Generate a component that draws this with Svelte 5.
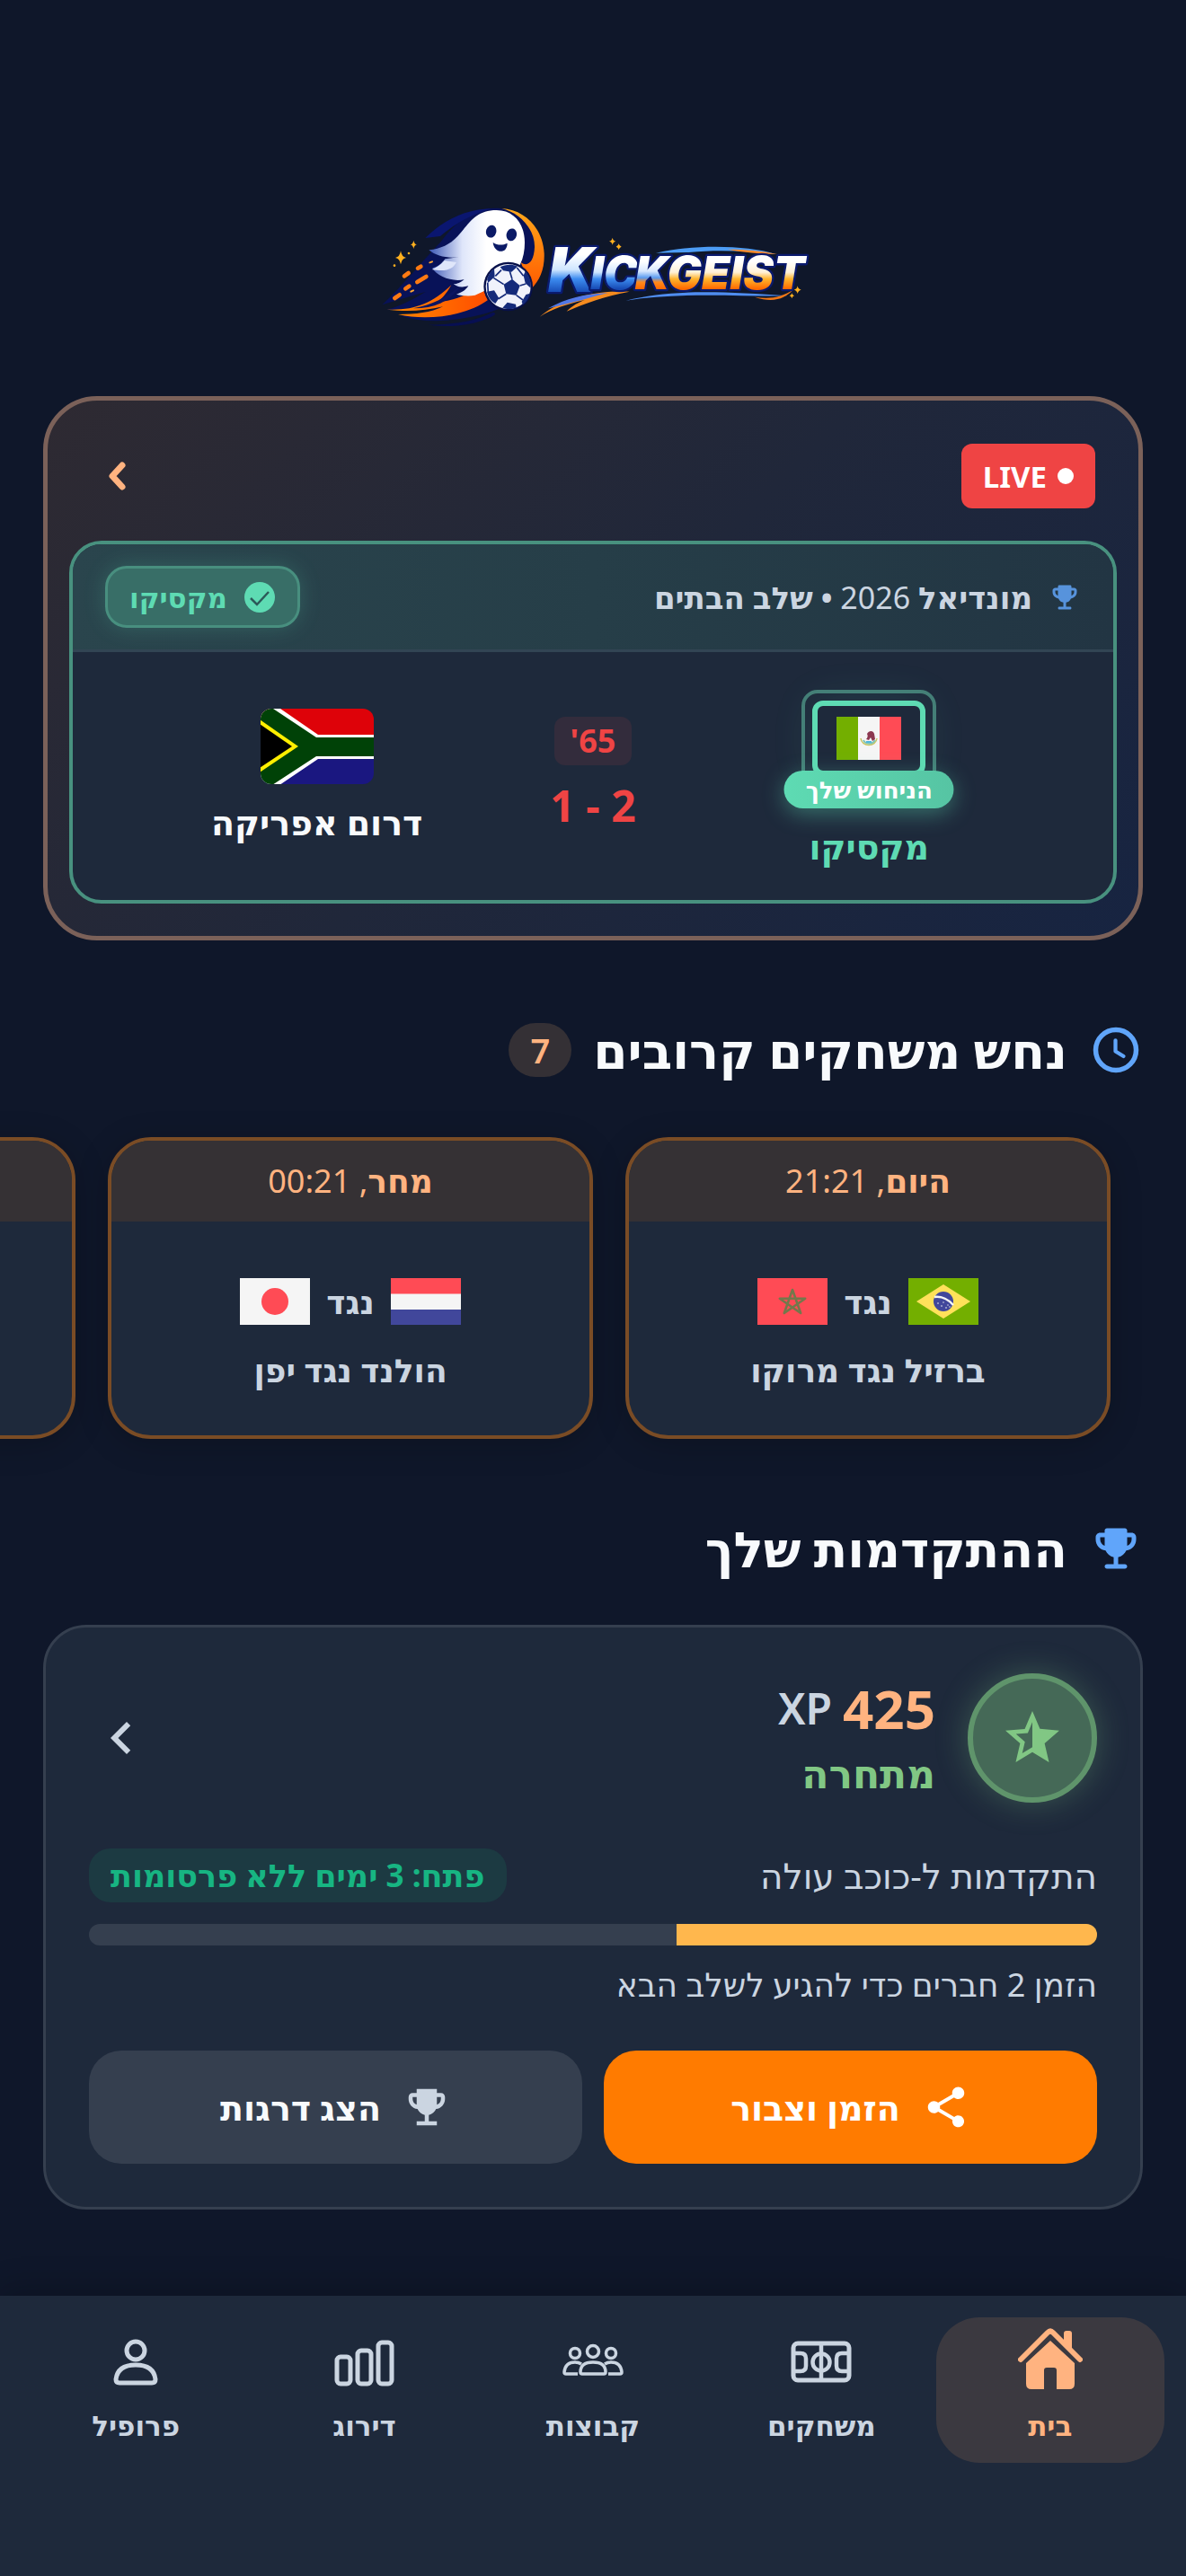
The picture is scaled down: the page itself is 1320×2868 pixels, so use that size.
<script lang="ts">
	type Match = { time_label: string; time: string; home: string; away: string; home_flag: string; away_flag: string };

	let upcoming: Match[] = [
		{ time_label: 'היום', time: '21:21', home: 'ברזיל', away: 'מרוקו', home_flag: 'br', away_flag: 'ma' },
		{ time_label: 'מחר', time: '00:21', home: 'הולנד', away: 'יפן', home_flag: 'nl', away_flag: 'jp' }
	];

	let tabs = [
		{ id: 'home', label: 'בית' },
		{ id: 'matches', label: 'משחקים' },
		{ id: 'groups', label: 'קבוצות' },
		{ id: 'ranking', label: 'דירוג' },
		{ id: 'profile', label: 'פרופיל' }
	];

	let active = $state('home');
	let upcoming_count = 7;
	let xp = 425;
	let progress = 41.7;
</script>

{#snippet trophy()}
	<svg class="icon" viewBox="0 0 24 24" fill="currentColor" aria-hidden="true">
		<path
			d="M19 5h-2V4c0-.55-.45-1-1-1H8c-.55 0-1 .45-1 1v1H5c-1.1 0-2 .9-2 2v1c0 2.55 1.92 4.63 4.39 4.94.63 1.5 1.98 2.63 3.61 2.96V19H8c-.55 0-1 .45-1 1s.45 1 1 1h8c.55 0 1-.45 1-1s-.45-1-1-1h-3v-3.1c1.63-.33 2.98-1.46 3.61-2.96C19.08 12.63 21 10.55 21 8V7c0-1.1-.9-2-2-2zM5 8V7h2v3.82C5.84 10.4 5 9.3 5 8zm14 0c0 1.3-.84 2.4-2 2.82V7h2v1z"
		/>
	</svg>
{/snippet}

{#snippet flag(code: string)}
	<svg class="flag" viewBox="0 0 78 52" preserveAspectRatio="none" aria-hidden="true">
		{#if code === 'br'}
			<rect width="78" height="52" fill="#73af00" />
			<path d="M39 7 69 26 39 45 9 26z" fill="#ffe15a" />
			<circle cx="39" cy="26" r="11" fill="#41479b" />
			<path d="M29 21c8-1 16 3 21 9" fill="none" stroke="#f5f5f5" stroke-width="2.6" />
			<g fill="#f5f5f5">
				<circle cx="33" cy="28" r=".8" /><circle cx="37" cy="31" r=".8" />
				<circle cx="42" cy="33" r=".8" /><circle cx="39" cy="27" r=".7" />
				<circle cx="44" cy="30" r=".7" /><circle cx="46" cy="32" r=".7" />
			</g>
		{:else if code === 'ma'}
			<rect width="78" height="52" fill="#ff4b55" />
			<path
				d="M39 13 48.2 39 24.8 22.8H53.2L29.8 39z"
				fill="none"
				stroke="#73784b"
				stroke-width="2.6"
				stroke-linejoin="round"
			/>
		{:else if code === 'nl'}
			<rect width="78" height="18" fill="#ff4b55" />
			<rect y="17.5" width="78" height="17.5" fill="#f5f5f5" />
			<rect y="35" width="78" height="17" fill="#41479b" />
		{:else if code === 'jp'}
			<rect width="78" height="52" fill="#f5f5f5" />
			<circle cx="39" cy="26" r="15" fill="#ff4b55" />
		{/if}
	</svg>
{/snippet}

<div class="page" dir="rtl" lang="he">
	<header class="top">
		<svg class="logo" viewBox="-15 0 1530 510" role="img" aria-label="KickGeist">
			<defs>
				<linearGradient id="ghost" x1="0" y1="0" x2="1" y2="0">
					<stop offset="0" stop-color="#3b57b5" />
					<stop offset=".35" stop-color="#dfe6fa" />
					<stop offset=".6" stop-color="#fff" />
				</linearGradient>
				<linearGradient id="flame" x1="0" y1="0" x2="1" y2="0">
					<stop offset="0" stop-color="#ff8a00" />
					<stop offset="1" stop-color="#ff4d00" />
				</linearGradient>
				<linearGradient id="ring" x1="0" y1="0" x2="0" y2="1">
					<stop offset="0" stop-color="#ffa91a" />
					<stop offset="1" stop-color="#ff5a00" />
				</linearGradient>
				<linearGradient id="blue" x1="0" y1="0" x2="0" y2="1">
					<stop offset=".3" stop-color="#ffffff" />
					<stop offset=".5" stop-color="#cfe6ff" />
					<stop offset=".62" stop-color="#3d8cf0" />
					<stop offset=".8" stop-color="#174bb5" />
				</linearGradient>
				<linearGradient id="gold" x1="0" y1="0" x2="0" y2="1">
					<stop offset=".3" stop-color="#fff" />
					<stop offset=".5" stop-color="#fff1d6" />
					<stop offset=".62" stop-color="#ffb52e" />
					<stop offset=".8" stop-color="#ff6a00" />
				</linearGradient>
				<linearGradient id="mix" x1="0" y1="0" x2="0" y2="1">
					<stop offset=".3" stop-color="#fff" />
					<stop offset=".48" stop-color="#d8e8ff" />
					<stop offset=".6" stop-color="#5a9bf0" />
					<stop offset=".68" stop-color="#ff8a1c" />
					<stop offset=".8" stop-color="#ff6a00" />
				</linearGradient>
			</defs>

			<!-- trail -->
			<path d="M46 388C110 330 190 230 240 180 290 110 360 60 440 66 540 74 585 160 580 240 570 330 470 400 380 420 280 445 190 450 110 425 180 420 230 400 260 390 190 400 120 405 62 405 110 390 150 370 190 345z" fill="#081258" />
			<path d="M190 165c60-60 130-95 220-98-70 22-120 50-170 92z" fill="#0a1670" />
			<path d="M200 455c90 0 160-14 215-42 20 4 0 14-10 18-60 26-130 34-205 24z" fill="#070f52" />
			<path d="M445 66c80 4 138 70 142 150 2 52-14 90-44 120l-34-90c24 18 44-2 46-50 2-60-50-116-110-130z" fill="url(#ring)" />
			<path d="M62 404c90 4 150-20 215-82-20 34-30 44-50 58 60-6 110-26 150-56l22 48c-60 46-190 74-300 48 60 0 110-6 150-26-60 14-120 18-187 10z" fill="url(#flame)" />
			<path d="M150 400c70-14 120-42 160-80-30 50-80 80-160 80z" fill="#0b1560" />
			<g stroke="#ff7a12" stroke-linecap="round" stroke-width="14">
				<path d="M120 292l14-10M165 266l10-6M163 312l30-18M124 334l12-8M88 366l16-11" />
			</g>
			<g stroke="#ffa733" stroke-linecap="round" stroke-width="6">
				<path d="M205 247l8-3M142 344l8-4" />
			</g>
			<!-- ghost -->
			<path
				d="M428 72c60 0 94 48 94 108 0 54-18 96-66 130l-100 46c-20 4-44 2-62-3 20-6 32-16 40-28-20 6-36 4-50-6 18-2 28-8 36-16-36 10-92-8-106-38 18-4 30-14 42-30l44-6c-40 4-74-4-98-24 40-4 70-18 96-46 40-44 60-87 130-87z"
				fill="url(#ghost)"
			/>
			<path d="M212 270c18-8 30-16 42-30l40 6c-10 20-30 34-82 24z" fill="#dfe6fa" />
			<ellipse cx="410" cy="143" rx="17" ry="21" fill="#0b1a66" transform="rotate(14 410 143)" />
			<ellipse cx="478" cy="154" rx="17" ry="21" fill="#0b1a66" transform="rotate(14 478 154)" />
			<path d="M416 180c16 10 32 10 48 2 0 38-44 36-48-2z" fill="#0b1a66" />
			<!-- ball -->
			<circle cx="467" cy="327" r="82" fill="#07104a" />
			<circle cx="467" cy="327" r="75" fill="#f0f2fb" />
			<g fill="#142a7a">
				<path d="M480 302l26 22-12 32-34-4-8-32z" />
				<path d="M440 262c18-10 42-10 58-2l-20 18-28-4z" />
				<path d="M524 276c14 16 20 36 18 56l-18-16-6-26z" />
				<path d="M396 302c6-16 12-26 24-34l2 26-22 20z" />
				<path d="M396 344l24-4 16 26-12 18c-16-10-24-22-28-40z" />
				<path d="M464 380l28 6 2 12c-14 5-34 5-46 0z" />
				<path d="M512 378l14-24 14-4c-4 16-12 28-24 38z" />
			</g>
			<g stroke="#142a7a" stroke-width="5" fill="none">
				<path d="M480 302l-8-26M506 324l20-6M494 356l22 16M460 352l-26 16M452 320l-34-22M424 292l20-20M398 314l2 32M518 292l-22-28" />
			</g>
			<!-- sparkles -->
			<g fill="#ffb01f">
				<path d="M108 208q3 20 18 23-15 3-18 22-3-19-18-22 15-3 18-23zM151 173q2 12 11 14-9 2-11 14-2-12-11-14 9-2 11-14z" />
				<circle cx="135" cy="216" r="4" /><circle cx="87" cy="257" r="4" />
				<path d="M815 164q2 10 11 12-9 2-11 12-2-10-11-12 9-2 11-12zM836 184q2 8 9 10-7 2-9 10-2-8-9-10 7-2 9-10zM1433 325q2 11 12 13-10 2-12 13-2-11-12-13 10-2 12-13zM1414 349q1 8 8 9-7 1-8 9-1-8-8-9 7-1 8-9z" />
			</g>
			<!-- swooshes round the name -->
			<path d="M960 215c120-28 300-28 400 4-90-10-190-16-290-6z" fill="#4c9cf5" />
			<path d="M1200 203c60 0 110 4 165 16-60-2-110-6-165-16z" fill="#ff8b2b" />
			<path d="M572 428c80-66 190-88 300-84-80 14-150 40-210 66 20-20 40-30 60-38-60 14-110 30-150 56z" fill="#f58b1f" />
			<path d="M600 400c60-34 120-48 200-52-60 16-120 34-200 52z" fill="#5278e6" />
			<path d="M860 374c160-40 330-30 540-16-150 4-350-14-540 16z" fill="#4f8df0" />
			<path d="M1290 362c50 8 90 2 130-26-30 34-70 46-130 26z" fill="#f27716" />
			<!-- name -->
			<g direction="ltr" class="logo-name">
				<text x="600" y="346" font-size="206" fill="url(#blue)">K</text>
				<text x="742" y="335" font-size="152" fill="url(#blue)">IC</text>
				<text x="890" y="335" font-size="152" fill="url(#mix)">K</text>
				<text x="998" y="335" font-size="152" fill="url(#gold)">GEIST</text>
			</g>
		</svg>
	</header>

	<main>
		<section class="live">
			<div class="live-head">
				<span class="live-badge"><span class="dot"></span>LIVE</span>
				<button class="live-open" type="button" aria-label="פתח משחק חי">
					<svg viewBox="0 0 60 60" fill="none" aria-hidden="true">
						<path d="M35 18 24 30l11 12" stroke="currentColor" stroke-width="7" stroke-linecap="round" stroke-linejoin="round" />
					</svg>
				</button>
			</div>

			<article class="live-match">
				<div class="match-head">
					<div class="competition">
						{@render trophy()}
						<span><b>מונדיאל</b> 2026 <b>• שלב הבתים</b></span>
					</div>
					<div class="pick">
						<svg viewBox="0 0 36 36" aria-hidden="true">
							<circle cx="18" cy="18" r="17" fill="currentColor" />
							<path d="m8 19 7 7L28 12" fill="none" stroke="#2c5a59" stroke-width="2.5" />
						</svg>
						מקסיקו
					</div>
				</div>
				<div class="match-body">
					<div class="team picked">
						<div class="flag-frame">
							<svg viewBox="0 0 72 48" aria-hidden="true">
								<rect width="24" height="48" fill="#73af00" />
								<rect x="24" width="24" height="48" fill="#f5f5f5" />
								<rect x="48" width="24" height="48" fill="#ff4b55" />
								<path d="M27 24c1 10 17 10 18 0" fill="none" stroke="#c8c460" stroke-width="1.5" />
								<path d="M30 26c2 5 10 5 13 0" fill="none" stroke="#7fc4b4" stroke-width="2" />
								<path d="M34 19c2-4 7-4 8 0l1 6-3 2-2-4-2 3-3-1c2-2 2-4 1-6z" fill="#8c3850" />
								<path d="M33 28h6" stroke="#4fb8e0" stroke-width="2" />
							</svg>
							<span class="your-pick">הניחוש שלך</span>
						</div>
						<span class="team-name">מקסיקו</span>
					</div>
					<div class="score">
						<span class="minute">65'</span>
						<strong>2 - 1</strong>
					</div>
					<div class="team">
						<svg class="team-flag" viewBox="0 0 126 84" aria-hidden="true">
							<rect width="126" height="42" fill="#de0209" />
							<rect y="42" width="126" height="42" fill="#1a1780" />
							<path d="M-4-18 64 29h62v27H64L-4 102z" fill="#fff" />
							<path d="M-10-16 62 32h64v21H62l-72 47z" fill="#004207" />
							<path d="M-4 10 42 42-4 73z" fill="#ffef00" />
							<path d="M-4 15 35 42-4 68z" fill="#000" />
						</svg>
						<span class="team-name">דרום אפריקה</span>
					</div>
				</div>
			</article>
		</section>

		<section class="block">
			<h2>
				<svg class="icon" viewBox="0 0 24 24" fill="none" stroke="currentColor" stroke-linecap="round" stroke-linejoin="round" aria-hidden="true">
					<circle cx="12" cy="12" r="9" stroke-width="2.2" />
					<path d="M11.8 7.7v4.9l3.6 2.2" stroke-width="1.7" />
				</svg>
				נחש משחקים קרובים
				<span class="count">{upcoming_count}</span>
			</h2>
			<div class="cards">
				{#each upcoming as match}
					<article class="card">
						<div class="card-time"><b>{match.time_label}</b>, {match.time}</div>
						<div class="card-body">
							<div class="versus">
								{@render flag(match.home_flag)}
								<span>נגד</span>
								{@render flag(match.away_flag)}
							</div>
							<p>{match.home} נגד {match.away}</p>
						</div>
					</article>
				{/each}
				<article class="card">
					<div class="card-time"></div>
					<div class="card-body"></div>
				</article>
			</div>
		</section>

		<section class="block">
			<h2>{@render trophy()} ההתקדמות שלך</h2>
			<div class="progress-card">
				<div class="rank">
					<div class="rank-badge">
						<svg viewBox="0 0 24 24" fill="currentColor" aria-hidden="true">
							<path
								d="M2 9.24l5.46 4.73L5.82 21 12 17.27 18.18 21l-1.64-7.03L22 9.24l-7.19-.62L12 2 9.19 8.63 2 9.24zM12 6.1v9.3l-3.76 2.27 1-4.28-3.32-2.88 4.38-.38L12 6.1z"
							/>
						</svg>
					</div>
					<div class="rank-info">
						<div class="xp"><strong>{xp}</strong><span>XP</span></div>
						<div class="rank-name">מתחרה</div>
					</div>
					<button class="rank-open" type="button" aria-label="פתח התקדמות">
						<svg viewBox="0 0 24 24" fill="currentColor" aria-hidden="true">
							<path d="M15.41 7.41 14 6l-6 6 6 6 1.41-1.41L10.83 12z" />
						</svg>
					</button>
				</div>
				<div class="goal">
					<span id="goal-label">התקדמות ל-כוכב עולה</span>
					<span class="reward">פתח: 3 ימים ללא פרסומות</span>
				</div>
				<div class="bar" role="progressbar" aria-labelledby="goal-label" aria-valuenow={progress}>
					<div class="bar-fill" style="width: {progress}%"></div>
				</div>
				<p class="hint">הזמן 2 חברים כדי להגיע לשלב הבא</p>
				<div class="actions">
					<button class="invite" type="button">
						<svg viewBox="0 0 24 24" fill="currentColor" aria-hidden="true">
							<path
								d="M18 16.08c-.76 0-1.44.3-1.96.77L8.91 12.7c.05-.23.09-.46.09-.7s-.04-.47-.09-.7l7.05-4.11c.54.5 1.25.81 2.04.81 1.66 0 3-1.34 3-3s-1.34-3-3-3-3 1.34-3 3c0 .24.04.47.09.7L8.04 9.81C7.5 9.31 6.79 9 6 9c-1.66 0-3 1.34-3 3s1.34 3 3 3c.79 0 1.5-.31 2.04-.81l7.12 4.16c-.05.21-.08.43-.08.65 0 1.61 1.31 2.92 2.92 2.92s2.92-1.31 2.92-2.92-1.31-2.92-2.92-2.92z"
							/>
						</svg>
						הזמן וצבור
					</button>
					<button class="levels" type="button">
						<svg viewBox="0 0 24 24" fill="currentColor" aria-hidden="true">
							<path
								d="M19 5h-2V3H7v2H5c-1.1 0-2 .9-2 2v1c0 2.55 1.92 4.63 4.39 4.94.63 1.5 1.98 2.63 3.61 2.96V19H7v2h10v-2h-4v-3.1c1.63-.33 2.98-1.46 3.61-2.96C19.08 12.63 21 10.55 21 8V7c0-1.1-.9-2-2-2zM5 8V7h2v3.82C5.84 10.4 5 9.3 5 8zm14 0c0 1.3-.84 2.4-2 2.82V7h2v1z"
							/>
						</svg>
						הצג דרגות
					</button>
				</div>
			</div>
		</section>
	</main>

	<nav>
		{#each tabs as tab}
			<button type="button" class:active={active === tab.id} onclick={() => (active = tab.id)}>
				<svg viewBox="0 0 72 72" fill="none" stroke="currentColor" stroke-width="5" stroke-linejoin="round" aria-hidden="true">
					{#if tab.id === 'home'}
						<path d="M3 35 33 5q3-3 6 0l30 30" stroke-width="6" stroke-linecap="round" />
						<path d="M51 6q0-3 3-3h3q3 0 3 3v22l-9-9z" fill="currentColor" stroke="none" />
						<path d="M36 14 63 39v23q0 6-6 6H43V47q0-3-3-3h-8q-3 0-3 3v21H15q-6 0-6-6V39z" fill="currentColor" stroke="none" />
					{:else if tab.id === 'matches'}
						<rect x="5" y="17" width="62" height="41" rx="5" />
						<path d="M36 17v41M5 28h8q6 0 6 6v8q0 6-6 6H5M67 28h-8q-6 0-6 6v8q0 6 6 6h8" stroke-width="4.5" />
						<circle cx="36" cy="38" r="9.5" stroke-width="4.5" />
					{:else if tab.id === 'groups'}
						<g stroke-width="3.5">
							<circle cx="36" cy="26" r="6.5" /><circle cx="16" cy="28" r="5.5" /><circle cx="56" cy="28" r="5.5" />
							<path d="M22 49q0-11 14-11t14 11q0 2-2 2H24q-2 0-2-2z" />
							<path d="M19 51H6q-2 0-2-2 1-11 12-11 4 0 7 2M53 51h13q2 0 2-2-1-11-12-11-4 0-7 2" />
						</g>
					{:else if tab.id === 'ranking'}
						<rect x="5" y="32" width="15" height="30" rx="4" />
						<rect x="28" y="25" width="15" height="37" rx="4" />
						<rect x="51" y="16" width="15" height="46" rx="4" />
					{:else}
						<circle cx="36" cy="25" r="10" />
						<path d="M14 57q2-16 22-16t22 16q0 4-4 4H18q-4 0-4-4z" />
					{/if}
				</svg>
				{tab.label}
			</button>
		{/each}
	</nav>
</div>

<style>
	:global(body) {
		margin: 0;
		background: #0f172a;
	}

	* {
		box-sizing: border-box;
	}

	.page {
		display: flex;
		flex-direction: column;
		min-height: 100vh;
		overflow: hidden;
		background: #0f172a;
		color: #f8fafc;
		font-family: 'Noto Sans', 'DejaVu Sans', sans-serif;
	}

	button {
		border: none;
		padding: 0;
		background: none;
		color: inherit;
		font-family: inherit;
		cursor: pointer;
	}

	svg {
		display: block;
		flex-shrink: 0;
	}

	.top {
		display: flex;
		justify-content: center;
		padding: 210px 0 61px;
	}

	.logo {
		width: 510px;
		height: 170px;
	}

	.logo-name text {
		font-family: Inter, sans-serif;
		font-weight: 900;
		font-style: italic;
		stroke: #0a1a6e;
		stroke-width: 14px;
		stroke-linejoin: round;
		paint-order: stroke;
	}

	main {
		display: flex;
		flex-direction: column;
		gap: 84px;
		padding: 0 48px 96px;
	}

	.live {
		border: 5px solid #7b6159;
		border-radius: 60px;
		padding: 48px 24px 36px;
		background: linear-gradient(135deg, #2e2a32 0%, #20273a 50%, #172441 100%);
	}

	.live-head {
		display: flex;
		justify-content: space-between;
		align-items: center;
		height: 72px;
		margin: 0 24px 36px;
	}

	.live-badge {
		display: flex;
		align-items: center;
		gap: 12px;
		height: 72px;
		padding: 0 24px;
		border-radius: 12px;
		background: #ef4444;
		color: #fff;
		font-size: 33px;
		font-weight: 700;
	}

	.dot {
		width: 18px;
		height: 18px;
		border-radius: 50%;
		background: #fff;
	}

	.live-open {
		color: #ffb380;
	}

	.live-open svg {
		width: 60px;
		height: 60px;
	}

	.live-match {
		border: 4px solid #48917f;
		border-radius: 36px;
		overflow: hidden;
		background: #1e293b;
	}

	.match-head {
		display: flex;
		justify-content: space-between;
		align-items: center;
		padding: 24px 36px;
		border-bottom: 3px solid #324554;
		background: linear-gradient(90deg, #2a454d, #263e48 50%, #223543);
	}

	.competition {
		display: flex;
		align-items: center;
		gap: 18px;
		color: #cbd5e1;
		font-size: 34px;
		line-height: 48px;
	}

	.competition .icon {
		width: 36px;
		height: 36px;
		color: #5793dc;
	}

	.pick {
		display: flex;
		align-items: center;
		gap: 18px;
		height: 69px;
		padding: 0 24px;
		border: 3px solid #488f7f;
		border-radius: 24px;
		background: #386e67;
		box-shadow: 0 0 24px rgba(94, 219, 179, 0.2);
		color: #5edbb3;
		font-size: 31px;
		font-weight: 700;
	}

	.pick svg {
		width: 36px;
		height: 36px;
	}

	.match-body {
		display: flex;
		align-items: center;
		padding: 36px;
	}

	.team {
		flex: 1;
		display: flex;
		flex-direction: column;
		align-items: center;
		gap: 18px;
	}

	.team-flag {
		width: 126px;
		height: 84px;
		border-radius: 12px;
	}

	.team-name {
		font-size: 38px;
		font-weight: 700;
		line-height: 48px;
	}

	.picked .team-name {
		color: #5edbb3;
	}

	.flag-frame {
		position: relative;
		display: flex;
		justify-content: center;
		align-items: center;
		width: 126px;
		height: 84px;
		margin: 18px 0 36px;
		border: 6px solid #5edbb3;
		border-radius: 12px;
		box-shadow: 0 0 48px rgba(94, 219, 179, 0.12);
	}

	.flag-frame::before {
		content: '';
		position: absolute;
		inset: -18px;
		border: 4px solid #447f77;
		border-radius: 18px;
	}

	.flag-frame svg {
		width: 72px;
		height: 48px;
	}

	.your-pick {
		position: absolute;
		top: 72px;
		left: 50%;
		transform: translateX(-50%);
		padding: 0 24px;
		border-radius: 24px;
		background: linear-gradient(90deg, #5edbb3, #56c4a3);
		box-shadow: 0 6px 24px rgba(94, 219, 179, 0.4);
		color: #fff;
		font-size: 26px;
		font-weight: 700;
		line-height: 42px;
		white-space: nowrap;
	}

	.score {
		display: flex;
		flex-direction: column;
		align-items: center;
		gap: 12px;
		padding: 0 24px;
		color: #ef4444;
	}

	.score strong {
		font-size: 48px;
		line-height: 66px;
	}

	.minute {
		padding: 0 18px;
		border-radius: 12px;
		background: #332c3c;
		font-size: 36px;
		font-weight: 700;
		line-height: 54px;
	}

	h2 {
		display: flex;
		align-items: center;
		gap: 24px;
		height: 75px;
		margin: 0;
		font-size: 55px;
		font-weight: 700;
	}

	h2 .icon {
		width: 60px;
		height: 60px;
		color: #60a5fa;
	}

	.count {
		padding: 0 24px;
		border-radius: 30px;
		background: #343035;
		color: #ffb380;
		font-size: 38px;
		font-weight: 600;
		line-height: 60px;
	}

	.cards {
		display: flex;
		gap: 36px;
		margin: 60px -48px 0;
		padding: 0 84px;
	}

	.card {
		flex: 0 0 540px;
		height: 336px;
		border: 4px solid #7a4c25;
		border-radius: 48px;
		overflow: hidden;
		background: #1e293b;
		box-shadow: 0 6px 36px rgba(0, 0, 0, 0.2);
	}

	.card-time {
		height: 90px;
		background: #353134;
		color: #ffb380;
		font-size: 36px;
		line-height: 90px;
		text-align: center;
	}

	.card-body {
		display: flex;
		flex-direction: column;
		align-items: center;
		gap: 12px;
		padding: 48px 36px;
		color: #cbd5e1;
		font-size: 36px;
		font-weight: 700;
	}

	.versus {
		display: flex;
		align-items: center;
		gap: 18px;
		height: 82px;
	}

	.flag {
		width: 78px;
		height: 52px;
	}

	.card-body p {
		margin: 0;
		line-height: 48px;
	}

	.progress-card {
		margin-top: 48px;
		padding: 48px;
		border: 3px solid #353f4f;
		border-radius: 48px;
		background: #1e293b;
	}

	.rank {
		display: flex;
		align-items: center;
		gap: 36px;
		height: 150px;
	}

	.rank-badge {
		display: flex;
		justify-content: center;
		align-items: center;
		width: 144px;
		height: 144px;
		border: 6px solid #5f946b;
		border-radius: 50%;
		background: #456957;
		box-shadow: 0 0 36px rgba(129, 199, 132, 0.3);
		color: #81c784;
	}

	.rank-badge svg {
		width: 72px;
		height: 72px;
	}

	.rank-info {
		flex: 1;
	}

	.xp {
		display: flex;
		align-items: center;
		gap: 12px;
		line-height: 78px;
	}

	.xp strong {
		color: #ffb380;
		font-size: 60px;
	}

	.xp span {
		color: #cbd5e1;
		font-size: 48px;
		font-weight: 600;
	}

	.rank-name {
		color: #81c784;
		font-size: 44px;
		font-weight: 700;
		line-height: 66px;
	}

	.rank-open {
		color: #cbd5e1;
	}

	.rank-open svg {
		width: 72px;
		height: 72px;
	}

	.goal {
		display: flex;
		justify-content: space-between;
		align-items: center;
		margin-top: 48px;
		color: #cbd5e1;
		font-size: 39px;
		line-height: 60px;
	}

	.reward {
		padding: 0 24px;
		border-radius: 24px;
		background: #1c3a42;
		color: #17b582;
		font-size: 35px;
		font-weight: 700;
	}

	.bar {
		height: 24px;
		margin-top: 24px;
		border-radius: 12px;
		overflow: hidden;
		background: #353f4f;
	}

	.bar-fill {
		height: 100%;
		background: #ffb74d;
	}

	.hint {
		margin: 18px 0 48px;
		color: #cbd5e1;
		font-size: 36px;
		line-height: 51px;
	}

	.actions {
		display: flex;
		gap: 24px;
	}

	.actions button {
		flex: 1;
		display: flex;
		justify-content: center;
		align-items: center;
		gap: 24px;
		height: 126px;
		border-radius: 36px;
		font-size: 38px;
		font-weight: 700;
		line-height: 48px;
	}

	.actions svg {
		width: 54px;
		height: 54px;
	}

	.invite {
		background: #ff7b00;
		color: #fff;
	}

	.invite svg {
		color: #fff;
	}

	.levels {
		background: #353f4f;
	}

	.levels svg {
		color: #cbd5e1;
	}

	nav {
		display: flex;
		margin-top: auto;
		padding: 24px 24px 126px;
		background: #1e293b;
		box-shadow: 0 -6px 36px rgba(0, 0, 0, 0.2);
	}

	nav button {
		flex: 1;
		display: flex;
		flex-direction: column;
		align-items: center;
		gap: 12px;
		height: 162px;
		padding-top: 12px;
		border-radius: 48px;
		color: #cbd5e1;
		font-size: 31px;
		font-weight: 700;
		line-height: 48px;
	}

	nav button.active {
		background: #3b3940;
		color: #ffb380;
	}

	nav svg {
		width: 72px;
		height: 72px;
	}
</style>
